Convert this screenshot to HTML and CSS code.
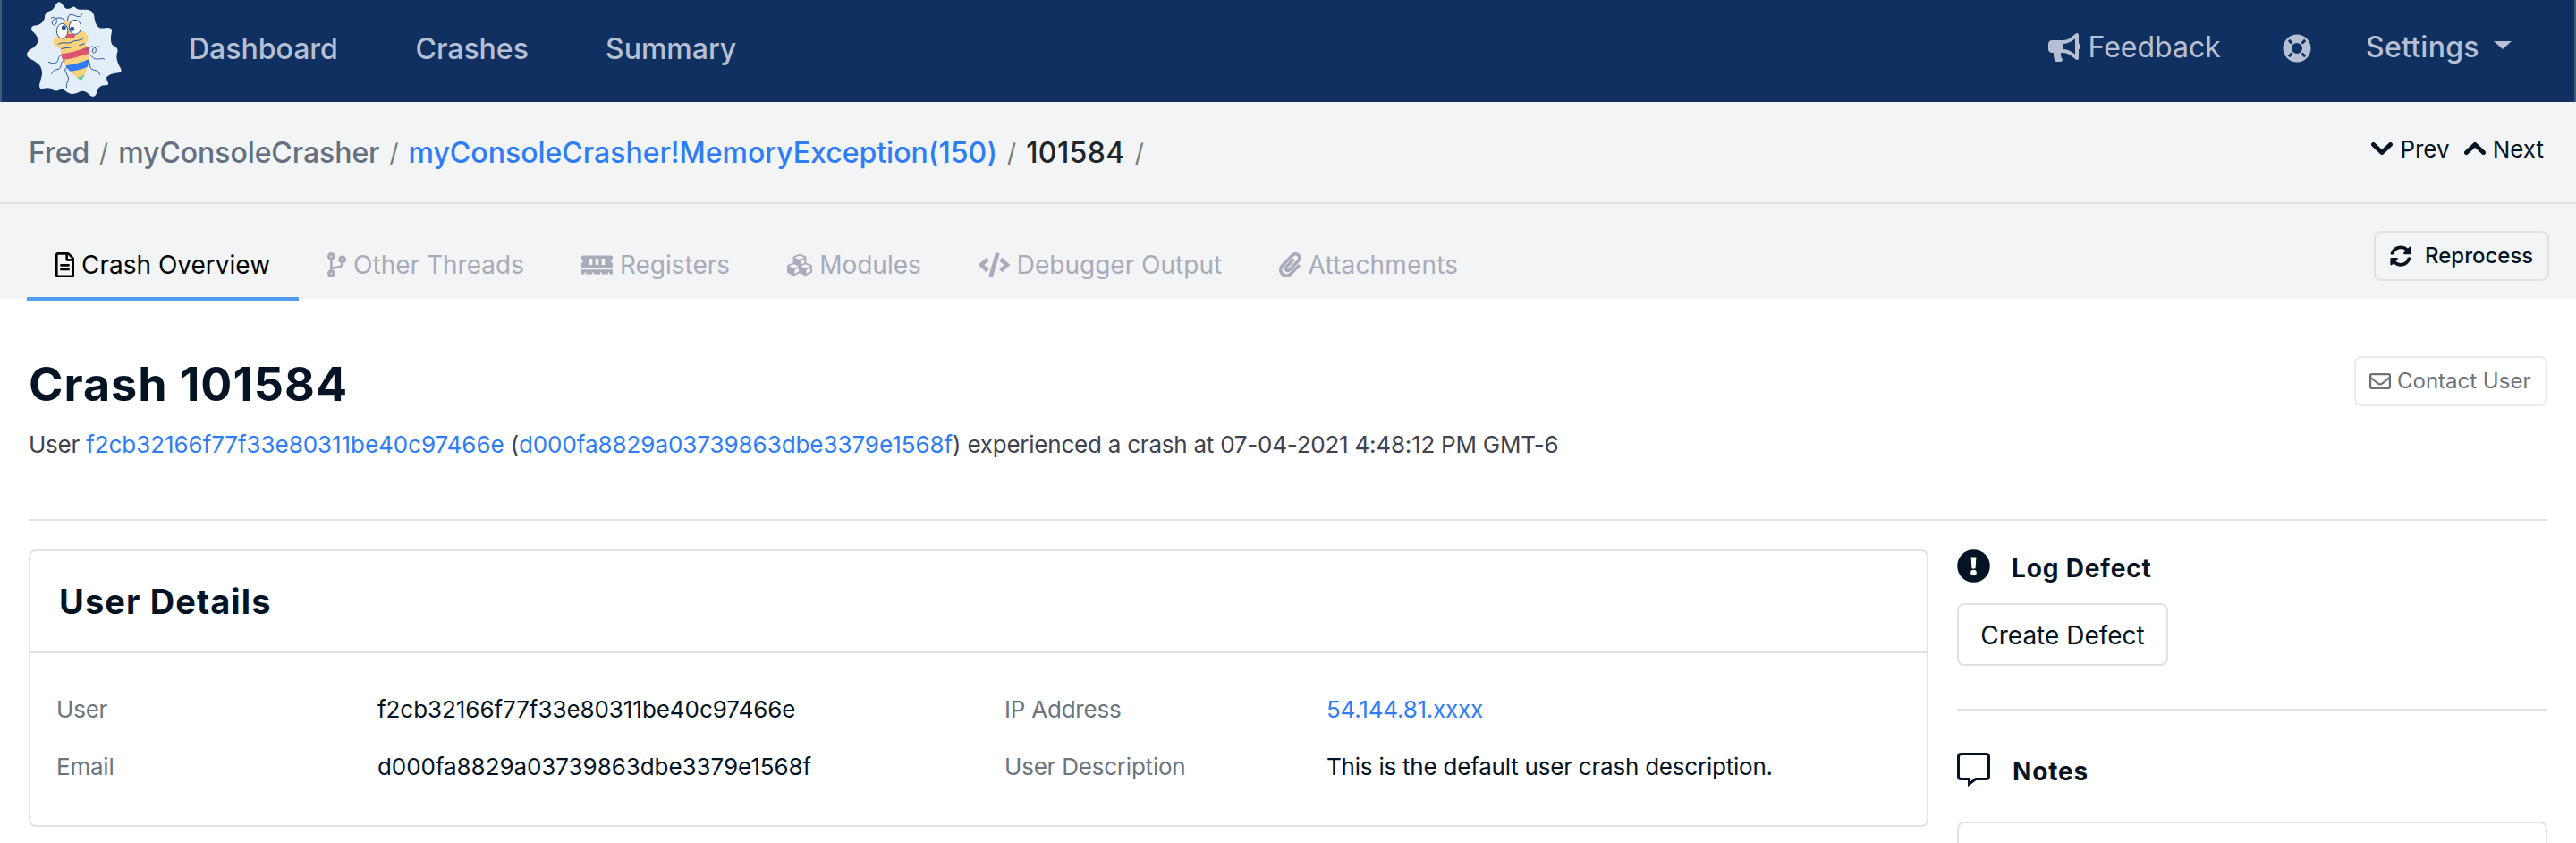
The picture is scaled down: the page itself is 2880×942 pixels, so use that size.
FILE: index.html
```html
<!DOCTYPE html>
<html lang="en">
<head>
<meta charset="utf-8">
<title>Crash 101584</title>
<link rel="stylesheet" href="styles.css">
</head>
<body>
<nav class="navbar">
  <svg class="logo" viewBox="90 0 330 330">
    <path fill="#e4eef9" d="M170 36Q178 33 186 18Q196-2 209 14Q214 26 224 30Q236 30 243 24Q249 20 256 28Q262 34 290 32Q312 33 316 54Q318 84 334 94Q344 96 358 93Q376 92 375 104Q368 138 376 150Q396 160 395 170Q388 190 394 206Q398 218 404 228Q412 242 398 244Q366 248 358 258Q356 264 360 272Q370 286 352 286Q334 286 328 300Q324 322 312 324Q302 322 294 312Q284 304 270 306Q252 318 236 314Q224 310 216 302Q206 296 194 304Q180 306 170 296Q156 292 140 299Q132 298 132 284Q138 264 141 250Q142 228 130 216Q118 204 98 196Q86 186 92 176Q98 166 112 160Q128 146 128 134Q124 116 108 104Q100 92 112 86Q124 86 132 82Q148 74 150 58Q150 40 170 36Z"/>
    <clipPath id="bug"><path d="M178 138Q180 124 198 122L205 80Q220 64 245 70L272 103Q295 112 296 126Q295 142 282 147Q292 150 297 158L299 200Q292 240 273 270Q238 250 219 218Q204 196 203 163Q180 158 178 138Z"/></clipPath>
    <g clip-path="url(#bug)">
      <path fill="#f9d27e" d="M170 60h140v220H170z"/>
      <path fill="#dc5470" d="M196 182Q250 178 304 152V176Q250 198 200 201Z"/>
      <path fill="#307bf6" d="M204 222Q260 216 304 196V220Q270 236 226 240Z"/>
      <path fill="#5ccf9b" d="M236 266Q268 262 300 240V280H240Z"/>
    </g>
    <g fill="#fff" stroke="#1f55a8" stroke-width="3"><ellipse cx="209" cy="104" rx="19" ry="25"/><ellipse cx="252" cy="91" rx="20" ry="24"/></g>
    <circle cx="214" cy="92" r="7.500" fill="#1f55a8"/><circle cx="242" cy="97" r="7.500" fill="#1f55a8"/>
    <ellipse cx="236" cy="121" rx="16" ry="8" fill="#dc5470" transform="rotate(-5 236 121)"/>
    <g fill="none" stroke="#1f55a8" stroke-width="3" stroke-linecap="round">
      <path d="M218 70C206 50 172 62 175 78C180 92 192 80 190 68C188 58 180 56 172 60M227 68C226 48 238 46 250 52C266 60 274 54 276 44M195 148C215 138 225 148 240 142C254 132 266 140 280 128M206 163L242 158M266 152L284 146M290 168C300 152 322 152 322 168C320 184 304 176 312 164C318 156 328 154 338 158M206 184C190 190 200 208 184 212C174 214 170 210 163 208M290 184C308 178 306 196 322 198C334 200 342 192 350 199M217 204C200 202 210 220 200 230C188 236 180 232 173 247M291 206C308 202 296 226 308 232C320 238 332 234 334 250M228 226C208 228 224 246 229 260C232 274 218 278 224 294"/>
    </g>
  </svg>
  <div class="nav-links"><a class="dash">Dashboard</a><a class="crashes">Crashes</a><a>Summary</a></div>
  <div class="nav-right">
    <a class="feedback"><svg class="i-horn" viewBox="0 0 576 512"><path d="M576 240c0-23.63-12.950-44.040-32-55.120V32.010C544 23.260 537.020 0 512 0c-7.120 0-14.190 2.380-19.980 7.020l-85.030 68.030C364.280 109.190 310.660 128 256 128H64c-35.350 0-64 28.650-64 64v96c0 35.350 28.650 64 64 64h33.700c-1.390 10.480-2.180 21.140-2.180 32 0 39.770 9.260 77.350 25.560 110.940 5.190 10.690 16.520 17.060 28.400 17.060h74.280c26.050 0 41.690-29.840 25.900-50.560-16.400-21.520-26.150-48.360-26.150-77.440 0-11.110 1.620-21.790 4.410-32H256c54.660 0 108.280 18.810 150.980 52.950l85.030 68.030a32.023 32.023 0 0 0 19.980 7.020c24.920 0 32-22.780 32-32V295.130C563.050 284.040 576 263.630 576 240zm-96 141.420l-33.050-26.440C392.950 311.780 325.120 288 256 288v-96c69.120 0 136.950-23.780 190.950-66.980L480 98.580v282.840z"/></svg><span>Feedback</span></a>
    <svg class="i-ring" viewBox="0 0 512 512"><path fill-rule="evenodd" d="M256 8a248 248 0 1 0 0 496a248 248 0 1 0 0-496zM256 160a96 96 0 1 1 0 192a96 96 0 1 1 0-192zM126 93L183 150L150 183L93 126ZM386 93L329 150L362 183L419 126ZM93 386L150 329L183 362L126 419ZM419 386L362 329L329 362L386 419Z"/></svg>
    <a class="settings"><span>Settings</span><i class="caret"></i></a>
  </div>
</nav>

<header class="crumb-bar">
  <div class="crumbs"><a class="app">Fred</a><i>/</i><a class="app">myConsoleCrasher</a><i>/</i><a class="link">myConsoleCrasher!MemoryException(150)</a><i>/</i><b>101584</b><i>/</i></div>
  <div class="pager">
    <svg class="i-chev" viewBox="0 0 24 14"><path d="M2.500 2.500L12 11.500L21.500 2.500"/></svg><span class="prev">Prev</span>
    <svg class="i-chev" viewBox="0 0 24 14"><path d="M2.500 11.500L12 2.500L21.500 11.500"/></svg><span class="next">Next</span>
  </div>
</header>

<div class="tab-bar">
  <div class="tabs">
    <a class="tab active"><svg width="21" height="28" viewBox="0 0 384 512"><path d="M288 248v28c0 6.600-5.400 12-12 12H108c-6.600 0-12-5.400-12-12v-28c0-6.600 5.400-12 12-12h168c6.600 0 12 5.400 12 12zm-12 72H108c-6.600 0-12 5.400-12 12v28c0 6.600 5.400 12 12 12h168c6.600 0 12-5.400 12-12v-28c0-6.600-5.400-12-12-12zm108-188.100V464c0 26.500-21.500 48-48 48H48c-26.500 0-48-21.500-48-48V48C0 21.500 21.500 0 48 0h204.100C264.800 0 277 5.100 286 14.100L369.900 98c9 8.900 14.100 21.200 14.100 33.900zm-128-80V128h76.100L256 51.900zM336 464V176H232c-13.300 0-24-10.700-24-24V48H48v416h288z"/></svg><span>Crash Overview</span></a>
    <a class="tab"><svg width="21" height="28" viewBox="0 0 384 512"><path d="M384 144c0-44.200-35.800-80-80-80s-80 35.800-80 80c0 36.400 24.300 67.100 57.500 76.800-.6 16.100-4.200 28.500-11 36.900-15.400 19.200-49.300 22.400-85.200 25.700-28.200 2.600-57.400 5.400-81.300 16.900v-144c32.500-10.200 56-40.500 56-76.300 0-44.200-35.800-80-80-80S0 35.800 0 80c0 35.800 23.500 66.100 56 76.300v199.300C23.500 365.900 0 396.200 0 432c0 44.200 35.800 80 80 80s80-35.800 80-80c0-34-21.200-63.100-51.200-74.600 3.100-5.200 7.800-9.800 14.900-13.400 16.200-8.200 40.400-10.400 66.100-12.800 42.200-3.900 90-8.400 118.200-43.400 14-17.400 21.100-39.800 21.600-67.900 31.600-10.800 54.400-40.700 54.400-75.900zM80 64c8.800 0 16 7.200 16 16s-7.200 16-16 16-16-7.200-16-16 7.200-16 16-16zm0 384c-8.800 0-16-7.200-16-16s7.200-16 16-16 16 7.200 16 16-7.200 16-16 16zm224-320c8.800 0 16 7.200 16 16s-7.200 16-16 16-16-7.200-16-16 7.200-16 16-16z"/></svg><span>Other Threads</span></a>
    <a class="tab"><svg width="35" height="28" viewBox="0 0 640 512"><path d="M640 130.940V96c0-17.670-14.330-32-32-32H32C14.330 64 0 78.330 0 96v34.940c18.600 6.610 32 24.190 32 45.060s-13.400 38.450-32 45.060V320h640v-98.940c-18.600-6.610-32-24.190-32-45.060s13.400-38.450 32-45.060zM224 256h-64V128h64v128zm128 0h-64V128h64v128zm128 0h-64V128h64v128zM0 448h64v-26.670c0-8.840 7.160-16 16-16s16 7.160 16 16V448h128v-26.670c0-8.840 7.160-16 16-16s16 7.160 16 16V448h128v-26.670c0-8.840 7.160-16 16-16s16 7.160 16 16V448h128v-26.670c0-8.840 7.160-16 16-16s16 7.160 16 16V448h64v-96H0v96z"/></svg><span>Registers</span></a>
    <a class="tab"><svg width="28" height="28" viewBox="0 0 512 512"><path d="M488.600 250.200L392 214V105.500c0-15-9.300-28.400-23.400-33.700l-100-37.500c-8.100-3.100-17.100-3.100-25.300 0l-100 37.500c-14.100 5.300-23.400 18.700-23.400 33.700V214l-96.600 36.200C9.300 255.500 0 268.900 0 283.900V394c0 13.600 7.700 26.100 19.900 32.200l100 50c10.100 5.100 22.100 5.100 32.200 0l103.900-52 103.900 52c10.100 5.100 22.100 5.100 32.200 0l100-50c12.200-6.100 19.900-18.600 19.900-32.200V283.900c0-15-9.300-28.400-23.400-33.700zM358 214.800l-85 31.900v-68.200l85-37v73.300zM154 104.100l102-38.200 102 38.200v.6l-102 41.400-102-41.400v-.6zm84 291.100l-85 42.500v-79.100l85-38.800v75.400zm0-112l-102 41.400-102-41.400v-.6l102-38.200 102 38.200v.6zm240 112l-85 42.500v-79.100l85-38.800v75.400zm0-112l-102 41.400-102-41.400v-.6l102-38.200 102 38.200v.6z"/></svg><span>Modules</span></a>
    <a class="tab"><svg width="35" height="28" viewBox="0 0 640 512"><path d="M278.900 511.500l-61-17.700c-6.400-1.800-10-8.500-8.200-14.900L346.200 8.700c1.800-6.400 8.500-10 14.900-8.200l61 17.700c6.400 1.800 10 8.500 8.200 14.900L293.800 503.300c-1.900 6.400-8.500 10.100-14.900 8.200zm-114-112.200l43.500-46.400c4.600-4.900 4.300-12.700-.8-17.200L117 256l90.600-79.700c5.100-4.500 5.500-12.300.8-17.200l-43.500-46.400c-4.500-4.800-12.100-5.100-17-.5L3.800 247.200c-5.100 4.700-5.100 12.800 0 17.500l144.100 135.100c4.900 4.600 12.500 4.400 17-.5zm327.200.6l144.100-135.100c5.100-4.700 5.100-12.800 0-17.500L492.100 112.100c-4.800-4.500-12.400-4.300-17 .5L431.600 159c-4.600 4.900-4.300 12.700.8 17.200L523 256l-90.600 79.700c-5.100 4.500-5.500 12.300-.8 17.200l43.500 46.400c4.500 4.900 12.100 5.100 17 .6z"/></svg><span>Debugger Output</span></a>
    <a class="tab"><svg width="24.500" height="28" viewBox="0 0 448 512"><path d="M43.246 466.142c-58.430-60.289-57.341-157.511 1.386-217.581L254.392 34c44.316-45.332 116.351-45.336 160.671 0 43.890 44.894 43.943 117.329 0 162.276L232.214 383.128c-29.855 30.537-78.633 30.111-107.982-.998-28.275-29.970-27.368-77.473 1.452-106.953l143.743-146.835c6.182-6.314 16.312-6.422 22.626-.241l22.861 22.379c6.315 6.182 6.422 16.312.241 22.626L171.427 319.927c-4.932 5.045-5.236 13.428-.648 18.292 4.372 4.634 11.245 4.711 15.688.165l182.849-186.851c19.613-20.062 19.613-52.725-.011-72.798-19.189-19.627-49.957-19.637-69.154 0L90.390 293.295c-34.763 35.560-35.299 93.120-1.191 128.313 34.010 35.093 88.985 35.137 123.058.286l172.060-175.999c6.177-6.319 16.307-6.433 22.626-.256l22.877 22.364c6.319 6.177 6.434 16.307.256 22.626l-172.060 175.998c-59.576 60.938-155.943 60.216-214.770-.485z"/></svg><span class="wide">Attachments</span></a>
  </div>
  <button class="reprocess"><svg width="24" height="24" viewBox="0 0 512 512"><path d="M370.720 133.280C339.458 104.008 298.888 87.962 255.848 88c-77.458.068-144.328 53.178-162.791 126.850-1.344 5.363-6.122 9.150-11.651 9.150H24.103c-7.498 0-13.194-6.807-11.807-14.176C33.933 94.924 134.813 8 256 8c66.448 0 126.791 26.136 171.315 68.685L463.030 40.970C478.149 25.851 504 36.559 504 57.941V192c0 13.255-10.745 24-24 24H345.941c-21.382 0-32.090-25.851-16.971-40.971l41.750-41.749zM32 296h134.059c21.382 0 32.090 25.851 16.971 40.971l-41.750 41.750c31.262 29.273 71.835 45.319 114.876 45.280 77.418-.07 144.315-53.144 162.787-126.849 1.344-5.363 6.122-9.150 11.651-9.150h57.304c7.498 0 13.194 6.807 11.807 14.176C478.067 417.076 377.187 504 256 504c-66.448 0-126.791-26.136-171.315-68.685L48.970 471.030C33.851 486.149 8 475.441 8 454.059V320c0-13.255 10.745-24 24-24z"/></svg><span>Reprocess</span></button>
</div>

<main class="page">
  <section class="title-row">
    <div>
      <h1>Crash 101584</h1>
      <p class="summary">User <a class="link">f2cb32166f77f33e80311be40c97466e</a> (<a class="link">d000fa8829a03739863dbe3379e1568f</a>) experienced a crash at 07-04-2021 4:48:12 PM GMT-6</p>
    </div>
    <button class="contact"><svg width="24" height="24" viewBox="0 0 512 512"><path d="M464 64H48C21.490 64 0 85.490 0 112v288c0 26.510 21.490 48 48 48h416c26.510 0 48-21.490 48-48V112c0-26.510-21.490-48-48-48zm0 48v40.805c-22.422 18.259-58.168 46.651-134.587 106.490-16.841 13.247-50.201 45.072-73.413 44.701-23.208.375-56.579-31.459-73.413-44.701C106.180 199.465 70.425 171.067 48 152.805V112h416zM48 400V214.398c22.914 18.251 55.409 43.862 104.938 82.646 21.857 17.205 60.134 55.186 103.062 54.955 42.717.231 80.509-37.199 103.053-54.947 49.528-38.783 82.032-64.401 104.947-82.653V400H48z"/></svg><span>Contact User</span></button>
  </section>
  <div class="columns">
    <section class="card">
      <h2>User Details</h2>
      <dl class="details">
        <dt>User</dt><dd class="hash">f2cb32166f77f33e80311be40c97466e</dd><dt>IP Address</dt><dd><a class="link">54.144.81.xxxx</a></dd>
        <dt>Email</dt><dd class="hash">d000fa8829a03739863dbe3379e1568f</dd><dt>User Description</dt><dd>This is the default user crash description.</dd>
      </dl>
    </section>
    <aside class="side">
      <section class="defect">
        <h3><svg width="37" height="37" viewBox="0 0 37 37"><circle cx="18.500" cy="18.500" r="18.300"/><path fill="#fff" d="M15.600 8.500h5.800l-.8 12.200q0 .8-.8.8h-2.600q-.8 0-.8-.8z"/><circle cx="18.500" cy="26" r="3.300" fill="#fff"/></svg><span>Log Defect</span></h3>
        <button class="create">Create Defect</button>
      </section>
      <section class="notes">
        <h3><svg width="38" height="38" viewBox="0 0 38 38"><path fill="none" stroke="#051424" stroke-width="3" d="M4.500 1.500H32.500Q35.500 1.500 35.500 4.500V26.500Q35.500 29.500 32.500 29.500H21L13.500 35V29.500H4.500Q1.500 29.500 1.500 26.500V4.500Q1.500 1.500 4.500 1.500Z"/></svg><span>Notes</span></h3>
        <div class="note-box"></div>
      </section>
    </aside>
  </div>
</main>
</body>
</html>
```

FILE: styles.css
```css
* { box-sizing: border-box; }
body { margin: 0; width: 2880px; height: 942px; overflow: hidden; background: #fff; color: #051424; font: 400 26px/32px Inter, "Liberation Sans", sans-serif; }
svg { display: block; flex: none; fill: currentColor; }
h1, h2, h3, p, dl, dd { margin: 0; }
i { font-style: normal; }
button { display: flex; align-items: center; background: transparent; border: 2px solid #dfe1e5; border-radius: 8px; color: inherit; font: inherit; margin: 0; }
.link { color: #2f7df6; }

.navbar { display: flex; height: 114px; padding-left: 28px; background: #0f3060; border-left: 2px solid #405982; border-right: 2px solid #405982; color: #b7c0d2; font-size: 32px; line-height: 40px; }
.logo { width: 110px; height: 110px; }
.nav-links { display: flex; align-items: center; height: 109px; margin-left: 71px; font-weight: 500; }
.dash { width: 253.5px; }
.crashes { width: 212.5px; }
.nav-right { display: flex; align-items: center; height: 105px; margin-left: auto; padding-right: 70px; }
.feedback { display: flex; align-items: center; gap: 8.5px; width: 262px; }
.i-horn { width: 36px; height: 32px; }
.i-ring { width: 32px; height: 32px; margin-top: 3px; }
.settings { display: flex; align-items: center; gap: 16px; width: 163px; margin-left: 61px; font-weight: 500; letter-spacing: .25px; }
.caret { border: 10px solid transparent; border-top: 9px solid #b7c0d2; border-bottom: 0; margin-top: -4px; }

.crumb-bar { display: flex; justify-content: space-between; height: 114px; padding: 0 36px 0 32px; background: #f3f4f6; border-bottom: 2px solid #dfe1e4; }
.crumbs { display: flex; align-items: center; padding-top: 2px; font-size: 32px; font-weight: 500; color: #64707f; }
.crumbs .app { letter-spacing: -.07px; }
.crumbs i { padding: 0 11px; color: #7a7a7a; font-size: 28px; font-weight: 400; }
.crumbs b { color: #212529; font-weight: 500; letter-spacing: .4px; }
.pager { display: flex; align-items: center; height: 104px; font-size: 26px; }
.i-chev { width: 24px; height: 14px; fill: none; stroke: #051424; stroke-width: 5; stroke-linecap: round; stroke-linejoin: round; }
.prev { margin: 0 16px 0 8px; padding-top: 2px; }
.next { margin-left: 8px; padding-top: 2px; }

.tab-bar { display: flex; justify-content: space-between; height: 106px; padding: 30px 30px 0; background: #f3f4f6; }
.tabs { display: flex; font-size: 28px; color: #a9aaba; }
.tab { display: flex; align-items: center; gap: 8px; height: 78px; padding: 0 32px 3px; white-space: nowrap; }
.tab.active { padding: 2px 32px 0; border-bottom: 4px solid #509eef; color: #000; }
.wide { letter-spacing: .15px; }
.reprocess { height: 56px; width: 196px; padding: 0 16px; gap: 15px; font-size: 24px; font-weight: 500; }

.page { padding: 64px 32px 0; }
.title-row { display: flex; justify-content: space-between; height: 184px; border-bottom: 2px solid #e1e1e6; }
h1 { font-size: 52px; line-height: 63px; font-weight: 700; letter-spacing: 1px; }
.summary { margin-top: 20px; color: #3f414f; letter-spacing: -.23px; }
.summary .link, .details .hash { letter-spacing: -.06px; }
.contact { height: 56px; width: 216px; padding: 0 15px; gap: 7px; border-color: #eaebed; color: #6f7278; font-size: 24px; }
.columns { display: grid; grid-template-columns: 2124px 660px; gap: 32px; padding-top: 32px; align-items: start; }
.card { height: 310px; border: 2px solid #e1e1e6; border-radius: 8px; }
h2 { height: 114px; padding-left: 32px; border-bottom: 2px solid #e1e1e6; font-size: 38px; line-height: 113px; font-weight: 700; letter-spacing: 1.1px; }
.details { display: grid; grid-template-columns: 359px 701px 360px 1fr; padding: 47px 0 0 29px; letter-spacing: -.22px; }
.details dt, .details dd { height: 64px; }
.details dt { color: #6c757d; }
.defect { height: 180px; border-bottom: 2px solid #e1e1e6; }
h3 { display: flex; align-items: center; gap: 24px; height: 37px; font-size: 28px; font-weight: 700; }
h3 span { padding-top: 4px; letter-spacing: .85px; }
.create { justify-content: center; width: 236px; height: 70px; margin-top: 23px; padding-top: 2px; border-color: #e1e1e6; font-size: 28px; }
.notes { padding-top: 47px; }
.note-box { height: 40px; margin-top: 40px; border: 2px solid #e1e1e6; border-bottom: 0; border-radius: 8px 8px 0 0; }
.side { height: 328px; overflow: hidden; }
```
